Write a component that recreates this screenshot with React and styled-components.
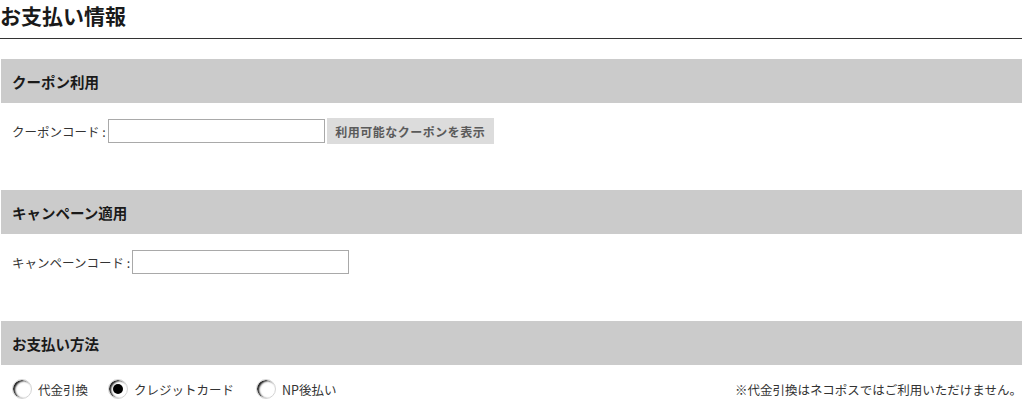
import React from "react";
import styled, { createGlobalStyle } from "styled-components";

const Global = createGlobalStyle`
  html, body { margin: 0; padding: 0; background: #fff; }
  body { font-family: "Noto Sans CJK JP", "Noto Sans", sans-serif; color: #222; }
`;

const Page = styled.div`
  width: 1022px;
`;

const Title = styled.h1`
  margin: 0;
  height: 38px;
  font-size: 21px;
  font-weight: 700;
  line-height: 30px;
  color: #1a1a1a;
  border-bottom: 1px solid #333;
`;

const Sections = styled.div`
  padding-top: 20px;
`;

const Section = styled.section``;

const SectionHead = styled.h2`
  margin: 0 0 0 1px;
  height: 44px;
  display: flex;
  align-items: center;
  padding-left: 11px;
  background: #cbcbcb;
  font-size: 14.5px;
  font-weight: 700;
  color: #1a1a1a;
`;

const SectionBody = styled.div`
  padding: ${(p) => (p.$last ? "14px 0 0 12px" : "15px 12px 46px 12px")};
`;

const Row = styled.div`
  display: flex;
  align-items: center;
  height: 26px;
`;

const Label = styled.label`
  font-size: 12.5px;
  color: #333;
  margin-right: 2px;
`;

const TextInput = styled.input`
  box-sizing: border-box;
  width: 217px;
  height: 24px;
  border: 1px solid #a9a9a9;
  padding: 2px 4px;
  font-size: 12px;
  outline: none;
`;

const GrayButton = styled.button`
  box-sizing: border-box;
  margin-left: 2px;
  width: 167px;
  height: 26px;
  border: none;
  background: #dcdcdc;
  color: #5a5a5a;
  font-family: "Noto Sans CJK JP", sans-serif;
  font-size: 12px;
  font-weight: 700;
  letter-spacing: 0.5px;
  padding: 0;
`;

const RadioRow = styled.div`
  display: flex;
  align-items: center;
  height: 20px;
`;

const RadioItem = styled.label`
  display: flex;
  align-items: center;
  margin-right: ${(p) => p.$gap}px;
  font-size: 12.5px;
  color: #333;
`;

const Circle = styled.span`
  position: relative;
  box-sizing: border-box;
  width: 20px;
  height: 20px;
  border-radius: 50%;
  border: 1px solid #d4d4d4;
  box-shadow: inset 2px 1px 2px rgba(0, 0, 0, 0.9);
  margin-right: 6px;
  background: #fff;
  &::after {
    content: "";
    display: ${(p) => (p.$checked ? "block" : "none")};
    position: absolute;
    left: 4px;
    top: 4px;
    width: 10px;
    height: 10px;
    border-radius: 50%;
    background: #000;
  }
`;

const Note = styled.span`
  margin-left: auto;
  font-size: 12.5px;
  color: #333;
`;

export default function App() {
  return (
    <Page>
      <Global />
      <Title>お支払い情報</Title>
      <Sections>
        <Section>
          <SectionHead>クーポン利用</SectionHead>
          <SectionBody>
            <Row>
              <Label>クーポンコード :</Label>
              <TextInput type="text" />
              <GrayButton type="button">利用可能なクーポンを表示</GrayButton>
            </Row>
          </SectionBody>
        </Section>
        <Section>
          <SectionHead>キャンペーン適用</SectionHead>
          <SectionBody>
            <Row>
              <Label>キャンペーンコード :</Label>
              <TextInput type="text" />
            </Row>
          </SectionBody>
        </Section>
        <Section>
          <SectionHead>お支払い方法</SectionHead>
          <SectionBody $last>
            <RadioRow>
              <RadioItem $gap={20}>
                <Circle />
                代金引換
              </RadioItem>
              <RadioItem $gap={22}>
                <Circle $checked />
                クレジットカード
              </RadioItem>
              <RadioItem $gap={0}>
                <Circle />
                NP後払い
              </RadioItem>
              <Note>※代金引換はネコポスではご利用いただけません。</Note>
            </RadioRow>
          </SectionBody>
        </Section>
      </Sections>
    </Page>
  );
}
